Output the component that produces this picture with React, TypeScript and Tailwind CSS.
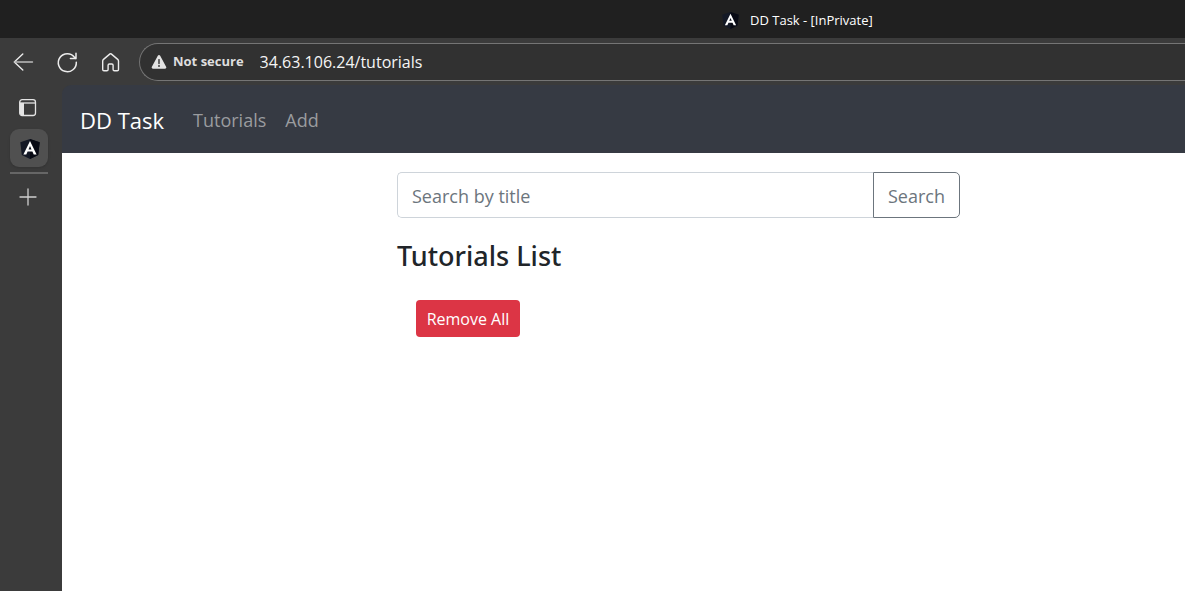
import React from 'react';

function AngularMark({ className }: { className: string }) {
  return (
    <svg viewBox="0 0 20 20" className={className} aria-hidden="true">
      <path d="M10 0 19.7 3.3 18.2 16 10 20 1.8 16 .3 3.3Z" fill="#141926" />
      <path d="M10 0 19.7 3.3 18.2 16 10 20Z" fill="#080a14" />
      <path
        d="M10 2 3.4 15.6h2.9l1.3-3h4.8l1.3 3h2.9L10 2Zm0 5 1.5 3.4h-3L10 7Z"
        fill="#fff"
      />
    </svg>
  );
}

function TitleBar() {
  return (
    <header className="flex h-[38px] items-center gap-[11px] bg-[#202020] pl-[722px] pt-[2px] text-white">
      <AngularMark className="size-[17px] shrink-0" />
      <span className="whitespace-nowrap text-[13px] leading-5">DD Task - [InPrivate]</span>
    </header>
  );
}

function Toolbar() {
  return (
    <div className="flex h-[47px] items-center bg-[#3b3b3b] pl-[11px]">
      <div className="flex shrink-0 gap-[20px] text-[#ececec]">
        <button type="button" aria-label="Back" className="size-6">
          <svg viewBox="0 0 24 24" className="size-6" fill="none" stroke="currentColor" strokeWidth="1.4" strokeLinecap="round" strokeLinejoin="round">
            <path d="M11.8 4 3.3 12l8.5 8" />
            <path d="M3.5 12H21.5" stroke="#bdbdbd" />
          </svg>
        </button>
        <button type="button" aria-label="Refresh" className="size-6">
          <svg viewBox="0 0 24 24" className="size-6" fill="none" stroke="currentColor" strokeWidth="1.5" strokeLinecap="round" strokeLinejoin="round">
            <path d="M21.3 12.2A9 9 0 1 1 19.6 7.4L21 8.6M21 3.2v5.4h-5.6" />
          </svg>
        </button>
        <button type="button" aria-label="Home" className="size-6">
          <svg viewBox="0 0 24 24" className="size-6" fill="none" stroke="currentColor" strokeWidth="1.4" strokeLinecap="round" strokeLinejoin="round">
            <path d="M11 3.9 4.5 9.4a2.2 2.2 0 0 0-.8 1.7v8.3c0 .8.5 1.3 1.3 1.3h2.8c.8 0 1.3-.5 1.3-1.3v-4.1c0-.8.5-1.3 1.3-1.3h2.4c.8 0 1.3.5 1.3 1.3v4.1c0 .8.5 1.3 1.3 1.3h2.8c.8 0 1.3-.5 1.3-1.3v-8.3a2.2 2.2 0 0 0-.8-1.7l-6.5-5.5a1 1 0 0 0-1.2 0Z" />
          </svg>
        </button>
      </div>
      <div className="ml-[16px] flex h-[38px] flex-1 items-center rounded-l-full border border-r-0 border-[#757575] bg-[#313131] pl-[11px]">
        <svg viewBox="0 0 16 16" className="size-4 shrink-0" aria-hidden="true">
          <path d="M6.8 1.8a1.4 1.4 0 0 1 2.4 0l5.9 10.9a1.3 1.3 0 0 1-1.2 2H2.1a1.3 1.3 0 0 1-1.2-2Z" fill="#e3e3e3" />
          <path d="M8 5.6v4" stroke="#313131" strokeWidth="1.4" strokeLinecap="round" />
          <circle cx="8" cy="12" r=".9" fill="#313131" />
        </svg>
        <span className="ml-[6px] whitespace-nowrap text-[13px] font-bold text-[#dedede]">Not secure</span>
        <input
          aria-label="Address"
          defaultValue="34.63.106.24/tutorials"
          className="ml-[16px] min-w-0 flex-1 bg-transparent text-[16px] text-[#f5f5f5] outline-none"
        />
      </div>
    </div>
  );
}

function TabRail() {
  return (
    <aside className="flex w-[62px] shrink-0 flex-col bg-[#3b3b3b] pl-[10px] pt-[13px] text-[#e4e4e4]">
      <button type="button" aria-label="Tab actions" className="ml-2 size-5">
        <svg viewBox="0 0 20 20" className="size-5" fill="none" stroke="currentColor" strokeWidth="1.3">
          <rect x="1.7" y="1.7" width="15.8" height="15.8" rx="2.5" />
          <path d="M1.7 5h15.8" />
          <path d="M2 5h4v12.3H4a2 2 0 0 1-2-2Z" fill="currentColor" stroke="none" />
        </svg>
      </button>
      <button type="button" aria-label="DD Task" className="mt-[11px] flex size-[38px] items-center justify-center rounded-[9px] bg-[#505050] pl-[2px] pt-[2px] shadow">
        <AngularMark className="size-5" />
      </button>
      <hr className="mt-[5px] w-[38px] border-t-2 border-[#666]" />
      <button type="button" aria-label="New tab" className="ml-2 mt-[13px] size-5">
        <svg viewBox="0 0 20 20" className="size-5" stroke="#d0d0d0" strokeWidth="1.3" strokeLinecap="round">
          <path d="M10 2v16M2 10h16" />
        </svg>
      </button>
    </aside>
  );
}

function TutorialsPage() {
  return (
    <div className="flex min-w-0 flex-1 flex-col">
      <nav className="flex h-[68px] items-center rounded-tl-[9px] bg-[#363a43] pl-[18px] pt-[3px]">
        <a href="#home" className="whitespace-nowrap text-[22px] text-white">DD Task</a>
        <a href="#tutorials" className="ml-[29px] text-[18px] text-[#9a9c9f]">Tutorials</a>
        <a href="#add" className="ml-[19px] text-[18px] text-[#9a9c9f]">Add</a>
      </nav>
      <main className="flex-1 bg-white pl-[335px] pt-[19px]">
        <form className="flex h-[46px] max-w-[563px]" onSubmit={(e) => e.preventDefault()}>
          <input
            type="text"
            aria-label="Search by title"
            placeholder="Search by title"
            className="min-w-0 flex-1 rounded-l-[5px] border border-r-0 border-[#ced4da] px-[14px] pt-[2px] text-[18px] text-[#495057] outline-none placeholder:text-[#6c757d]"
          />
          <button type="submit" className="w-[87px] rounded-r-[5px] border border-[#6c757d] pt-[2px] text-[18px] text-[#6c757d]">
            Search
          </button>
        </form>
        <h4 className="mt-[20px] font-['Noto_Sans','Open_Sans',sans-serif] text-[27px] font-medium leading-[36px] text-[#212529]">Tutorials List</h4>
        <button type="button" className="ml-[19px] mt-[26px] h-[37px] w-[104px] rounded-[4px] bg-[#dc3545] text-[16px] text-white">
          Remove All
        </button>
      </main>
    </div>
  );
}

export default function App() {
  return (
    <div className="flex min-h-screen flex-col overflow-hidden bg-[#3b3b3b] font-['Open_Sans','Noto_Sans',sans-serif]">
      <TitleBar />
      <Toolbar />
      <div className="flex flex-1">
        <TabRail />
        <TutorialsPage />
      </div>
    </div>
  );
}
